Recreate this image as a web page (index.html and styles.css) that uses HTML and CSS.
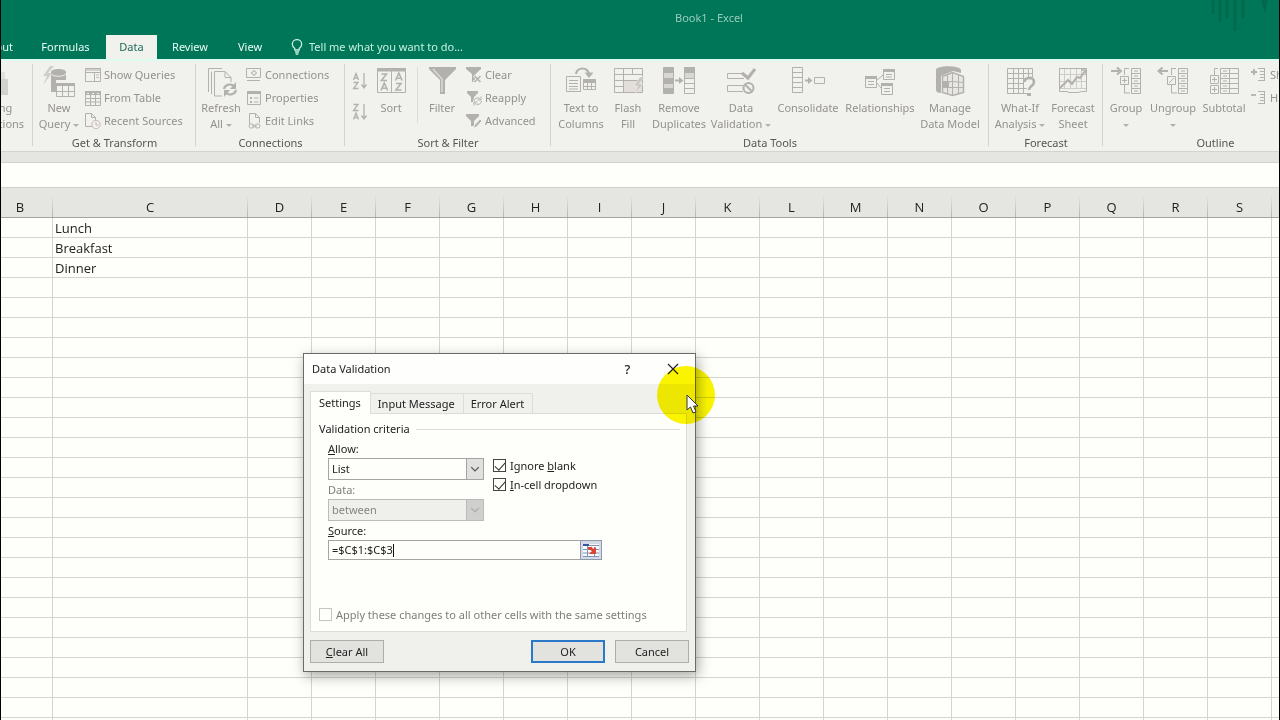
FILE: index.html
```html
<!DOCTYPE html>
<html lang="en">
<head>
<meta charset="utf-8">
<title>Book1 - Excel</title>
<link rel="stylesheet" href="styles.css">
</head>
<body>
<div class="app">
  <header class="titlebar">
    <h1 class="title">Book1 - Excel</h1>
    <svg class="deco" width="68" height="34" viewBox="0 0 68 34"><path d="M2 0v14M9 0v22M16 0v18M24 0v31M32 0v18" stroke="#00684d" stroke-width="3"/><path d="M50 0h7l-3 13z" fill="#00684d"/></svg>
  </header>
  <nav class="tabs">
    <button class="tab tab-cut">Page Layout</button>
    <button class="tab tab-formulas">Formulas</button>
    <button class="tab tab-active">Data</button>
    <button class="tab tab-review">Review</button>
    <button class="tab tab-view">View</button>
    <button class="tab tell"><svg width="12" height="16" viewBox="0 0 12 16" fill="none" stroke="#c5efe2" stroke-width="1.3"><path d="M3.8 11V9.6C2.2 8.300 1.300 7 1.300 5.300a4.700 4.700 0 0 1 9.400 0c0 1.700-.9 3-2.500 4.300V11zM4 13h4M4.600 15h2.800"/></svg>Tell me what you want to do...</button>
  </nav>

  <div class="ribbon">
    <section class="group g-ext">
      <div class="tools">
        <button class="big w-ext"><svg class="ico" width="34" height="34" viewBox="0 0 34 34"><path d="M14 13h19v16H14z" fill="#d3d1cd"/><path d="M22 6h8v7h-8z" fill="#e2e0dc"/></svg><span>Existing<br>Connections</span></button>
      </div>
      <h2 class="glabel"></h2>
    </section>

    <section class="group g-get">
      <div class="tools">
        <button class="big w52"><svg class="ico" width="34" height="34" viewBox="0 0 34 34"><path d="M8 0L1 10h4L1 19l9-12H6l6-7z" fill="#d0cecb"/><path d="M9 6v20h5V14h10V6c0-4-15-4-15 0z" fill="#b3b1ae"/><path d="M9 8c3 3 12 3 15 0" fill="none" stroke="#f1f1ed"/><path d="M14.500 17.500h18v13h-18z" fill="#f1f1ed" stroke="#b3b1ae"/><path d="M14 17h19v3H14z" fill="#b3b1ae"/><path d="M20.500 20v11M26.500 20v11M15 25.500h18" stroke="#b3b1ae"/></svg><span>New<br>Query <i class="dd"></i></span></button>
        <div class="list">
          <button class="small"><svg width="16" height="16" viewBox="0 0 16 16" fill="none" stroke="#b3b1ae"><path d="M.5 1.500h15v13H.5zM.5 5.500h15M9.500 5.500v9"/><path d="M1 2h14v2H1z" fill="#d6d0cd" stroke="none"/><path d="M11 8h3M11 10.500h3" stroke="#d0b9b5"/></svg>Show Queries</button>
          <button class="small"><svg width="16" height="16" viewBox="0 0 16 16" fill="none" stroke="#b3b1ae"><path d="M.5 1.500h15v14H.5zM.5 8.500h15M.5 12h15M5.500 5v10M10.500 5v10"/><path d="M.5 1.500h15v3H.5z" fill="#b3b1ae"/><path d="M2 3.500h2M7 3.500h2M12 3.500h2" stroke="#f1f1ed"/></svg>From Table</button>
          <button class="small"><svg width="16" height="16" viewBox="0 0 16 16" fill="none" stroke="#b3b1ae"><path d="M7 13.500H.5v-13h6l4 4V7M6.500.5v4h4"/><circle cx="11" cy="11.500" r="4.200" stroke="#c5b8b6"/><path d="M11 9v3h2.500" stroke="#c5b8b6"/></svg>Recent Sources</button>
        </div>
      </div>
      <h2 class="glabel">Get &amp; Transform</h2>
    </section>

    <section class="group g-conn">
      <div class="tools">
        <button class="big w50"><svg class="ico" width="34" height="34" viewBox="0 0 34 34" fill="none" stroke="#b3b1ae"><path d="M4.500 26V2.500H18M7.500 28V5.500M18 30h-7.500V5.500H21l6 6V16M21 5.500v6h6"/><path d="M20 23c1-5 8-6 10.500-2M32 24c-1 5-8 6-10.500 2" stroke-width="2.200"/><path d="M32 16v7h-6zM20 31v-7h6z" fill="#b3b1ae" stroke="none"/></svg><span>Refresh<br>All <i class="dd"></i></span></button>
        <div class="list">
          <button class="small"><svg width="16" height="16" viewBox="0 0 16 16" fill="none" stroke="#b3b1ae"><path d="M.5 1.500h14v9H.5zM1 13.500h13"/><circle cx="8" cy="6" r="2"/><path d="M8 3v1M8 8v1M5 6h1M10 6h1"/></svg>Connections</button>
          <button class="small"><svg width="16" height="16" viewBox="0 0 16 16" fill="none" stroke="#b3b1ae"><path d="M1.500 1.500h13v13h-13z"/><path d="M1.500 1.500h13v2h-13z" fill="#b3b1ae"/><path d="M4 7h2v2H4zM4 11h2v2H4z" fill="#b3b1ae" stroke="none"/><path d="M8 8h4.500M8 12h4.500"/></svg>Properties</button>
          <button class="small"><svg width="16" height="16" viewBox="0 0 16 16" fill="none" stroke="#b3b1ae"><path d="M3.500 9V.5h6l4 4V10M9.500.5v4h4M3.500 9v2"/><rect x="3" y="11" width="5" height="4" rx="2"/><rect x="9" y="11" width="5" height="4" rx="2"/><path d="M6 13h5"/></svg>Edit Links</button>
        </div>
      </div>
      <h2 class="glabel">Connections</h2>
    </section>

    <section class="group g-sort">
      <div class="tools">
        <div class="azcol">
          <button class="mini" aria-label="Sort A to Z"><svg width="16" height="18" viewBox="0 0 16 18"><path d="M1.500 8L4 1.500 6.500 8M2.300 6h3.400M1.500 10.500H6L1.500 16.500H6.500M12 1v14M9.500 12.500L12 16l2.500-3.500" fill="none" stroke="#b3b1ae" stroke-width="1.300"/></svg></button>
          <button class="mini" aria-label="Sort Z to A"><svg width="16" height="18" viewBox="0 0 16 18"><path d="M1.500 1.500H6L1.500 7.500H6.500M1.500 16.500L4 10l2.500 6.500M2.300 14.500h3.400M12 1v14M9.500 12.500L12 16l2.500-3.500" fill="none" stroke="#b3b1ae" stroke-width="1.300"/></svg></button>
        </div>
        <button class="big w40"><svg class="ico" width="34" height="34" viewBox="0 0 34 34" fill="none" stroke="#b3b1ae"><path d="M3.500 2.500h28v24h-28zM17.500 5v21"/><path d="M3 2h29v3.500H3z" fill="#b3b1ae" stroke="none"/><path d="M7.500 8h5l-5 6.500h5.500M7 24.500l3.300-7.500 3.300 7.500M8.300 22.200h4M21.500 14.500L24.800 7l3.300 7.500M22.800 12.200h4M22 17.500h5l-5 6.500h5.500" stroke-width="1.600"/></svg><span>Sort</span></button>
        <div class="vsep"></div>
        <button class="big w48"><svg class="ico" width="34" height="34" viewBox="0 0 34 34"><path d="M4 1h27v2L20 14v14h-5V14L4 3z" fill="#b3b1ae"/><path d="M8 3l9 10v13" stroke="#dcdad6" fill="none" stroke-width="1.500"/></svg><span>Filter</span></button>
        <div class="list">
          <button class="small"><svg width="16" height="16" viewBox="0 0 16 16"><path d="M0 0h15v2L9.500 7v8H6V7L0 2z" fill="#b3b1ae"/><path d="M8 8.500l7 6.500M15 8.500L8 15" stroke="#f1f1ed" stroke-width="3"/><path d="M8.500 9l6 6M14.500 9l-6 6" stroke="#b3b1ae" stroke-width="1.500"/></svg>Clear</button>
          <button class="small"><svg width="16" height="16" viewBox="0 0 16 16"><path d="M1 1h11v2L8 7v5H5V7L1 3z" fill="#b3b1ae"/><circle cx="11.500" cy="11" r="4.500" fill="#f1f1ed"/><path d="M8 11c.5-3.500 5-4 6.500-1.500M15.500 11c-.5 4-5.500 4.500-7 1.500M15 6.500v3.500h-3.500M8 15.500V12h3.500" fill="none" stroke="#b3b1ae"/></svg>Reapply</button>
          <button class="small"><svg width="16" height="16" viewBox="0 0 16 16"><path d="M0 1h13v2L8 8v5H5V8L0 3z" fill="#b3b1ae"/><path d="M7.500 15.500l1-3.500 5.500-6 2 2-5.500 6z" fill="#b3b1ae" stroke="#f1f1ed"/></svg>Advanced</button>
        </div>
      </div>
      <h2 class="glabel">Sort &amp; Filter</h2>
    </section>

    <section class="group g-data">
      <div class="tools">
        <button class="big w52"><svg class="ico" width="34" height="34" viewBox="0 0 34 34" fill="none" stroke="#b3b1ae"><path d="M2.500 10.500h14v15h-14zM5 14.500h9M5 17.500h9M5 20.500h9M5 23h9M19.500 14.500h12v9h-12zM23.500 17v7M27.500 17v7M19.500 20.500h12"/><path d="M19 13h13v4H19z" fill="#b3b1ae" stroke="none"/><path d="M12 8c1-7 12-8 13 1" stroke-width="2.200"/><path d="M20.500 6.500h9L25 12z" fill="#b3b1ae" stroke="none"/></svg><span>Text to<br>Columns</span></button>
        <button class="big w42"><svg class="ico" width="34" height="34" viewBox="0 0 34 34" fill="none" stroke="#b3b1ae"><path d="M12 14h19v12H12z" fill="#e4dedb" stroke="none"/><path d="M3.500 2.500h28v24h-28zM12.500 2.500v24M3.500 8.500h28M3.500 14.500h28M3.500 20.500h9M21.500 2.500v6"/><path d="M29 11l-6 9h4l-4 9 9-11h-4l5-7z" fill="#c9c6c3" stroke="#f1f1ed" stroke-width=".5"/></svg><span>Flash<br>Fill</span></button>
        <button class="big w60"><svg class="ico" width="34" height="34" viewBox="0 0 34 34" fill="none" stroke="#b3b1ae"><path d="M1.500 1.500h10v26h-10z" fill="#b3b1ae"/><path d="M2 7h9v5H2zM2 18h9v4H2z" fill="#d9d7d3" stroke="none"/><path d="M22.500 1.500h10v26h-10zM22.500 12.500h10M22.500 17.500h10M22.500 22.500h10"/><path d="M22 1h11v6H22z" fill="#b3b1ae" stroke="none"/><path d="M23 7h9v5h-9z" fill="#d9d7d3" stroke="none"/><path d="M13 14.500h6" stroke-width="2"/><path d="M17 11l4.500 3.500L17 18z" fill="#b3b1ae" stroke="none"/></svg><span>Remove<br>Duplicates</span></button>
        <button class="big w64"><svg class="ico" width="34" height="34" viewBox="0 0 34 34" fill="none" stroke="#b3b1ae"><path d="M19 7.500H3.500v5H20M19 19.500H3.500v6H19"/><path d="M18 7l6 5L31 3" stroke-width="3"/><circle cx="24.500" cy="22" r="5" stroke-width="2"/><path d="M21 18.500l7 7" stroke-width="2"/></svg><span>Data<br>Validation <i class="dd"></i></span></button>
        <button class="big w70"><svg class="ico" width="34" height="34" viewBox="0 0 34 34" fill="none" stroke="#b3b1ae"><path d="M1.500 1.500h10v25h-10zM1.500 6.500h10M1.500 11.500h10M1.500 16.500h10M1.500 21.500h10M23.500 11.500h10v6h-10z"/><path d="M14 14.500h5" stroke-width="2"/><path d="M17 11l4.500 3.500L17 18z" fill="#b3b1ae" stroke="none"/></svg><span>Consolidate</span></button>
        <button class="big w74"><svg class="ico" width="34" height="34" viewBox="0 0 34 34" fill="none" stroke="#b3b1ae"><path d="M2.500 10.500h11v11h-11zM20.500 3.500h11v10h-11zM18.500 17.500h11v11h-11zM14 14l6-5M14 17l4 5M5 15.500h6M5 18.500h6M23 8.500h6M23 11h6M21 22.500h6M21 25.500h6"/><path d="M2 10h12v3H2zM20 3h12v3H20zM18 17h12v3H18z" fill="#b3b1ae" stroke="none"/></svg><span>Relationships</span></button>
        <button class="big w66"><svg class="ico" width="34" height="34" viewBox="0 0 34 34" fill="none" stroke="#b3b1ae"><path d="M3 4c0-5 24-5 25 0v3l-8-2-12 5v17C5 27 3 26 3 24z" fill="#b3b1ae" stroke="none"/><path d="M9.500 10.500l10-4 11 4v16l-11 3-10-3z" fill="#e8e6e2" stroke-width="1.500"/><path d="M19.500 7v22M10 16.500l9.500-1 11 1M10 21.500h20M14.500 9v19M25.500 9v19"/><path d="M10 15h6v7h-6z" fill="#b3b1ae" stroke="none"/></svg><span>Manage<br>Data Model</span></button>
      </div>
      <h2 class="glabel">Data Tools</h2>
    </section>

    <section class="group g-fore">
      <div class="tools">
        <button class="big w54"><svg class="ico" width="34" height="34" viewBox="0 0 34 34" fill="none" stroke="#b3b1ae"><path d="M4.500 2.500h25v25h-25zM10.500 2.500v25M15.500 2.500v25M20.500 2.500v25M25.500 2.500v10M4.500 7.500h25M4.500 12.500h25M4.500 17.500h20M4.500 22.500h20"/><path d="M21 18v-4l3-3h8v20h-8v-8z" fill="#f1f1ed" stroke="none"/><path d="M21.500 16c0-5 9.500-6 9.500 0 0 4-5 4-5 8" stroke-width="2.600"/><path d="M24 27h4v3h-4z" fill="#b3b1ae" stroke="none"/></svg><span>What-If<br>Analysis <i class="dd"></i></span></button>
        <button class="big w52"><svg class="ico" width="34" height="34" viewBox="0 0 34 34" fill="none" stroke="#b3b1ae"><path d="M3.500 2.500h27v20h-27zM8.500 2.500v20M14.500 2.500v20M20.500 2.500v20M25.500 2.500v20M3.500 8.500h27M3.500 15.500h27" stroke="#cfcdc9"/><path d="M3.500 2.500h27v23h-5l-3 1H13l-2-1H3.500z"/><path d="M4 22l8-8 4 4 5-7 3 1 5-7" stroke-width="2"/><path d="M25 4h5v5" stroke-width="1.500"/></svg><span>Forecast<br>Sheet</span></button>
      </div>
      <h2 class="glabel">Forecast</h2>
    </section>

    <section class="group g-out">
      <div class="tools">
        <button class="big w46"><svg class="ico" width="34" height="34" viewBox="0 0 34 34" fill="none" stroke="#b3b1ae"><path d="M22.500 2.500h9v25h-9zM22.500 7.500h9M22.500 12.500h9M22.500 17.500h9M22.500 22.500h9M25 5h4M25 10h4M25 15h4M25 20h4M25 25h4M20 2.500h-4.500V9M15.500 19v8H21M11.500 10.500h8v8h-8zM13 14.500h5M15.500 12v5"/><path d="M2 5h8M8 1.500L12 5 8 8.500" stroke-width="2"/></svg><span>Group<br><i class="dd"></i></span></button>
        <button class="big w48"><svg class="ico" width="34" height="34" viewBox="0 0 34 34" fill="none" stroke="#b3b1ae"><path d="M22.500 2.500h9v25h-9zM22.500 7.500h9M22.500 12.500h9M22.500 17.500h9M22.500 22.500h9M25 5h4M25 10h4M25 15h4M25 20h4M25 25h4M20 2.500h-4.500V9M15.500 19v8H21M11.500 10.500h8v8h-8zM13 17l5-5"/><path d="M3 5h9M6.500 1.500L2.500 5l4 3.500" stroke-width="2"/></svg><span>Ungroup<br><i class="dd"></i></span></button>
        <button class="big w54"><svg class="ico" width="34" height="34" viewBox="0 0 34 34" fill="none" stroke="#b3b1ae"><path d="M13.500 2.500h18v25h-18zM22.500 2.500v25M13.500 7.500h18M13.500 12.500h18M13.500 17.500h18M13.500 22.500h18M16 5h4M16 10h4M16 15h4M16 20h4M16 25h4M11 2.500H7.500V9"/><path d="M3.500 9.500h8v8h-8zM3.500 19.500h8v8h-8z" fill="#f1f1ed"/><path d="M5 13.500h5M7.500 11v5M5 23.500h5M7.500 21v5"/></svg><span>Subtotal</span></button>
        <div class="list">
          <button class="small"><svg width="16" height="16" viewBox="0 0 16 16" fill="none" stroke="#b3b1ae"><path d="M0 5h6M3 2v6" stroke-width="1.800"/><path d="M7 1.500h6M9 4.500h4M9 7.500h4M9 10.500h4M7 13.500h6M13.500 1v13"/></svg>Show Detail</button>
          <button class="small"><svg width="16" height="16" viewBox="0 0 16 16" fill="none" stroke="#b3b1ae"><path d="M0 5h5" stroke-width="1.800"/><path d="M7 1.500h6M9 4.500h4M9 7.500h4M9 10.500h4M7 13.500h6M13.500 1v13"/></svg>Hide Detail</button>
        </div>
      </div>
      <h2 class="glabel">Outline</h2>
    </section>
  </div>

  <div class="formula-wrap"><input class="formula" type="text" aria-label="Formula bar"></div>

  <main class="sheet">
    <table class="grid">
      <colgroup id="cols"></colgroup>
      <thead><tr id="head"></tr></thead>
      <tbody id="rows"></tbody>
    </table>
  </main>
</div>

<form class="dialog" role="dialog" aria-labelledby="dlg-title">
  <div class="dlg-bar">
    <h2 class="dlg-title" id="dlg-title">Data Validation</h2>
    <button type="button" class="dlg-ctl help">?</button>
    <button type="button" class="dlg-ctl" aria-label="Close"><svg width="12" height="12" viewBox="0 0 12 12"><path d="M1 1l10 10M11 1L1 11" stroke="#222" stroke-width="1.200"/></svg></button>
  </div>
  <div class="dlg-body">
    <div class="dlg-tabs">
      <button type="button" class="dtab on">Settings</button>
      <button type="button" class="dtab">Input Message</button>
      <button type="button" class="dtab">Error Alert</button>
    </div>
    <div class="panel">
      <h3 class="legend">Validation criteria</h3>
      <div class="criteria">
        <div class="fields">
          <label class="flabel" for="allow"><u>A</u>llow:</label>
          <div class="combo"><select id="allow"><option>List</option></select><svg class="arrow" viewBox="0 0 17 20"><path d="M4.500 8l4 4 4-4" fill="none" stroke="#555" stroke-width="1.400"/></svg></div>
          <label class="flabel dim" for="data">Data:</label>
          <div class="combo off"><select id="data" disabled><option>between</option></select><svg class="arrow" viewBox="0 0 17 20"><path d="M4.500 8l4 4 4-4" fill="none" stroke="#aaa" stroke-width="1.400"/></svg></div>
        </div>
        <div class="checks">
          <label class="check"><input type="checkbox" checked><span>Ignore <u>b</u>lank</span></label>
          <label class="check"><input type="checkbox" checked><span><u>I</u>n-cell dropdown</span></label>
        </div>
      </div>
      <div class="source">
        <label class="flabel" for="source"><u>S</u>ource:</label>
        <div class="ref">
          <input id="source" type="text" value="=$C$1:$C$3"><span class="caret"></span>
          <button type="button" class="pick" aria-label="Select range"><svg width="16" height="13" viewBox="0 0 16 13"><path d="M0 0h16v13H0z" fill="#f7f9fc"/><path d="M0 1.500h16M0 5.500h16M0 9h16M0 12.500h16M4.500 0v13M11.500 3v10" stroke="#8294b8" fill="none"/><path d="M0 0h6v2H0z" fill="#36559b"/><path d="M5 3h4l1 2 3-2v7H6l3-3-4-2z" fill="#dc4431"/></svg></button>
        </div>
      </div>
      <label class="check apply dim"><input type="checkbox" disabled><span>Apply these changes to all other cells with the same settings</span></label>
    </div>
    <div class="actions">
      <button type="button" class="btn clear"><span><u>C</u>lear All</span></button>
      <button type="button" class="btn ok">OK</button>
      <button type="button" class="btn">Cancel</button>
    </div>
  </div>
</form>

<div class="spot"></div>
<svg class="cursor" width="13" height="20" viewBox="0 0 13 20"><path d="M1 1v15l3.500-3 2.500 6 3-1.200L7.500 12H12z" fill="#fff" stroke="#333"/></svg>
<script src="script.js"></script>
</body>
</html>
```
FILE: styles.css
```css
* { box-sizing: border-box; }
body {
  margin: 0;
  height: 100vh;
  overflow: hidden;
  font: 11px/16px "Noto Sans", "Open Sans", sans-serif;
  color: #222;
  background: #fefefa;
}
button, input, select { font: inherit; color: inherit; margin: 0; }
button { border: 0; padding: 0; background: none; }
h1, h2, h3 { margin: 0; font: inherit; }

.app {
  height: 100vh;
  display: flex;
  flex-direction: column;
  overflow: hidden;
  border-left: 1px solid #000;
  border-right: 1px solid #000;
}

/* title bar and tabs */
.titlebar {
  height: 35px;
  flex: none;
  display: grid;
  grid-template-columns: 206px 1fr 68px;
  background: #007658;
}
.title { grid-column: 2; text-align: center; line-height: 35px; color: #96cdbb; }
.deco { grid-column: 3; }
.tabs {
  height: 26px;
  flex: none;
  display: flex;
  background: #007658;
  border-bottom: 2px solid #d9fbf0;
  color: #e9fbf5;
  overflow: hidden;
}
.tab { white-space: nowrap; flex: none; }
.tab-cut { width: 12px; display: flex; justify-content: flex-end; align-items: center; }
.tab-formulas { width: 93px; padding-left: 12px; }
.tab-active { width: 51px; background: #f1f1ed; color: #1f6b55; }
.tab-review { width: 66px; }
.tab-view { width: 54px; }
.tell { display: flex; align-items: center; gap: 6px; padding-left: 14px; color: #c5efe2; }

/* ribbon */
.ribbon {
  flex: none;
  display: flex;
  height: 91px;
  overflow: hidden;
  background: #f1f1ed;
  border-bottom: 1px solid #d3d3cf;
  color: #94928e;
}
.group {
  flex: none;
  display: flex;
  flex-direction: column;
  justify-content: space-between;
  overflow: hidden;
  position: relative;
  padding-top: 2px;
}
.group::after {
  content: "";
  position: absolute;
  right: 0;
  top: 3px;
  bottom: 5px;
  border-right: 1px solid #d3d3cf;
}
.g-ext { width: 32px; }
.g-ext .tools { justify-content: flex-end; padding-right: 6px; }
.g-get { width: 163px; }
.g-conn { width: 149px; }
.g-sort { width: 206px; }
.g-data { width: 438px; }
.g-data .tools, .g-fore .tools { padding-left: 4px; }
.g-fore { width: 114px; }
.g-out { width: 225px; }
.tools { display: flex; align-items: flex-start; }
.glabel { height: 16px; text-align: center; color: #575652; }
.big {
  flex: none;
  display: flex;
  flex-direction: column;
  align-items: center;
  padding-top: 3px;
  white-space: nowrap;
}
.big span { text-align: center; }
.ico { display: block; }
.w-ext { width: 70px; }
.w40 { width: 40px; }
.w42 { width: 42px; }
.w46 { width: 46px; }
.w48 { width: 48px; }
.w50 { width: 50px; }
.w52 { width: 52px; }
.w54 { width: 54px; }
.w60 { width: 60px; }
.w64 { width: 64px; }
.w66 { width: 66px; }
.w70 { width: 70px; }
.w74 { width: 74px; }
.dd {
  display: inline-block;
  vertical-align: middle;
  border: 3px solid transparent;
  border-top-color: #b3b1ae;
  border-bottom: 0;
}
.list { display: flex; flex-direction: column; }
.small {
  height: 23px;
  display: flex;
  align-items: center;
  gap: 3px;
  white-space: nowrap;
}
.small svg { flex: none; }
.azcol { width: 26px; padding: 9px 0 0 7px; display: flex; flex-direction: column; gap: 13px; }
.mini { height: 18px; display: flex; }
.vsep { width: 1px; height: 56px; margin: 4px 0 0 6px; background: #dcdcd8; }

/* formula bar */
.formula-wrap { flex: none; padding-top: 10px; background: #e5e6e1; }
.formula {
  display: block;
  width: 100%;
  height: 26px;
  border: 1px solid #d0d1cc;
  border-width: 1px 0;
  background: #fefefa;
}

/* worksheet, scrolled a little way into column B */
.sheet { flex: 1; min-height: 0; overflow: hidden; }
.grid {
  width: 1347px;
  margin-left: -13px;
  table-layout: fixed;
  border-collapse: separate;
  border-spacing: 0;
  font: 13px/17px "Open Sans", "Noto Sans", sans-serif;
}
.grid th {
  height: 30px;
  padding: 9px 1px 0 0;
  font-weight: 400;
  background: linear-gradient(#e5e6e1, #b5b6b1) right bottom / 1px 22px no-repeat #e5e6e1;
  border-bottom: 1px solid #a3a49f;
}
.grid td {
  height: 20px;
  padding: 2px 0 0 2px;
  border-right: 1px solid #d3d5ce;
  border-bottom: 1px solid #d3d5ce;
}
.col-b { width: 65px; }
.col-c { width: 195px; }
.col { width: 64px; }

/* dialog window */
.dialog {
  position: absolute;
  left: 303px;
  top: 353px;
  width: 393px;
  border: 1px solid #6b6b69;
  background: #f0f0ed;
  box-shadow: 2px 4px 12px rgba(0, 0, 0, .35);
}
.dlg-bar { display: flex; height: 30px; background: #fefefc; padding-left: 8px; }
.dlg-title { flex: 1; line-height: 30px; }
.dlg-ctl { width: 45px; display: grid; place-items: center; }
.help { font-size: 13px; font-weight: 500; }
.dlg-body { padding: 7px 6px 8px; }
.dlg-tabs { display: flex; align-items: flex-end; }
.dtab {
  height: 20px;
  padding: 0 8px 0 7px;
  border: 1px solid #dcdcda;
  border-width: 1px 1px 0 0;
}
.on {
  height: 23px;
  margin-bottom: -1px;
  padding: 0 9px 1px 8px;
  background: #fefefa;
  border-left-width: 1px;
  position: relative;
}
.panel {
  margin-right: 2px;
  border: 1px solid #dcdcda;
  background: #fefefa;
  padding: 7px 6px 7px 8px;
}
.legend { display: flex; align-items: center; gap: 6px; }
.legend::after { content: ""; flex: 1; border-top: 1px solid #dcdcda; }
.criteria { display: flex; gap: 9px; padding: 2px 0 0 9px; }
.fields { width: 156px; }
.flabel { display: block; height: 19px; line-height: 19px; }
.combo { display: grid; grid-template-columns: 1fr 18px; height: 22px; }
.combo select {
  grid-area: 1 / 1 / 2 / 3;
  appearance: none;
  border: 1px solid #a5a5a3;
  border-radius: 0;
  background: #fefefa;
  padding: 0 3px;
  opacity: 1;
}
.arrow {
  grid-area: 1 / 2;
  width: 100%;
  height: 100%;
  pointer-events: none;
  background: #e0e0de;
  border: 1px solid #a5a5a3;
  z-index: 1;
}
.off select { background: #efefec; color: #858583; border-color: #bbbbb9; }
.off .arrow { background: #cfcfcd; border-color: #bbbbb9; }
.dim { color: #7d7d7b; }
.checks { padding-top: 17px; }
.check { display: flex; align-items: center; gap: 4px; height: 19px; }
.check input {
  appearance: none;
  width: 13px;
  height: 13px;
  border: 1px solid #444;
  background: #fefefa;
  display: grid;
  place-items: center;
}
.check input:checked::after {
  content: "";
  width: 9px;
  height: 5px;
  border: solid #333;
  border-width: 0 0 1px 1px;
  transform: translateY(-1px) rotate(-48deg);
}
.check input:disabled { border-color: #c4c4c2; }
.source { padding-left: 9px; }
.ref { position: relative; display: flex; width: 274px; height: 20px; }
.ref input {
  flex: 1;
  min-width: 0;
  border: 1px solid #a5a5a3;
  border-right: 0;
  background: #fefefa;
  padding: 0 3px;
}
.caret { position: absolute; left: 65px; top: 4px; height: 13px; border-left: 1px solid #111; }
.pick {
  width: 22px;
  border: 1px solid #8d99ad;
  background: #d3dae6;
  display: grid;
  place-items: center;
}
.apply { margin-top: 45px; }
.actions { display: flex; gap: 10px; padding-top: 8px; }
.btn {
  width: 74px;
  height: 23px;
  border: 1px solid #adadab;
  background: #e2e2df;
}
.clear { margin-right: auto; }
.ok { border: 2px solid #2c78c8; }

/* pointer */
.spot {
  position: absolute;
  left: 657px;
  top: 366px;
  width: 58px;
  height: 58px;
  border-radius: 50%;
  background: #fbf500;
  mix-blend-mode: multiply;
}
.cursor { position: absolute; left: 686px; top: 394px; }
```
FILE: script.js
```js
const columns = "BCDEFGHIJKLMNOPQRST".split("");
const values = { C: ["Lunch", "Breakfast", "Dinner"] };
const rowCount = 26;

const colgroup = document.getElementById("cols");
const head = document.getElementById("head");
const body = document.getElementById("rows");

columns.forEach((name) => {
  const col = document.createElement("col");
  col.className = name === "B" ? "col-b" : name === "C" ? "col-c" : "col";
  colgroup.append(col);
  const th = document.createElement("th");
  th.scope = "col";
  th.textContent = name;
  head.append(th);
});

for (let r = 0; r < rowCount; r++) {
  const tr = document.createElement("tr");
  columns.forEach((name) => {
    const td = document.createElement("td");
    td.textContent = (values[name] && values[name][r]) || "";
    tr.append(td);
  });
  body.append(tr);
}
```
